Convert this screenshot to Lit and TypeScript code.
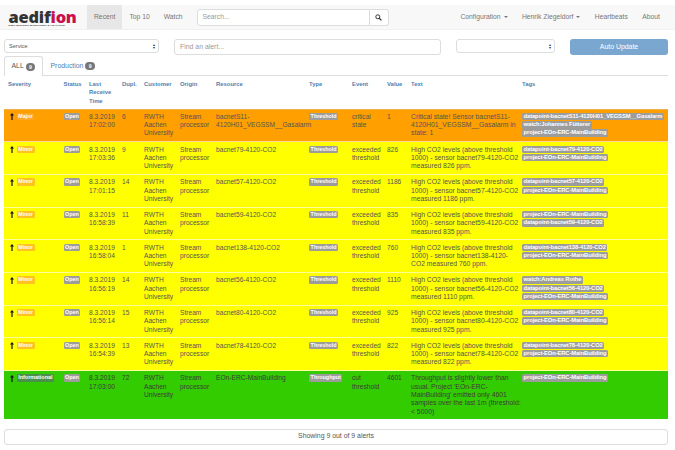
import { LitElement, html, css } from "lit";
import { customElement } from "lit/decorators.js";

type Row = {
  sev: string; cls: string; time: [string, string]; dupl: string; res: string;
  type: string; event: [string, string]; value: string; text: string[]; tags: string[];
};

const co2 = (n: string, v: string, time: string, dupl: string, tags?: string[], text?: string[]): Row => ({
  sev: "Minor", cls: "minor", time: ["8.3.2019", time], dupl, res: `bacnet${n}-4120-CO2`,
  type: "Threshold", event: ["exceeded", "threshold"], value: v,
  text: text ?? ["High CO2 levels (above threshold", `1000) - sensor bacnet${n}-4120-CO2`, `measured ${v} ppm.`],
  tags: tags ?? [`datapoint-bacnet${n}-4120-CO2`, "project-EOn-ERC-MainBuilding"],
});

const rows: Row[] = [
  { sev: "Major", cls: "major", time: ["8.3.2019", "17:02:00"], dupl: "6", res: "bacnetS11-4120H01_VEGSSM__Gasalarm",
    type: "Threshold", event: ["critical", "state"], value: "1",
    text: ["Critical state! Sensor bacnetS11-", "4120H01_VEGSSM__Gasalarm in", "state: 1"],
    tags: ["datapoint-bacnetS11-4120H01_VEGSSM__Gasalarm", "watch:Johannes Fütterer", "project-EOn-ERC-MainBuilding"] },
  co2("79", "826", "17:03:36", "9"),
  co2("57", "1186", "17:01:15", "14"),
  co2("59", "835", "16:58:39", "11", ["project-EOn-ERC-MainBuilding", "datapoint-bacnet59-4120-CO2"]),
  co2("138", "760", "16:58:04", "1", undefined, ["High CO2 levels (above threshold", "1000) - sensor bacnet138-4120-", "CO2 measured 760 ppm."]),
  co2("56", "1110", "16:56:19", "14", ["watch:Andreas Rothe", "datapoint-bacnet56-4120-CO2", "project-EOn-ERC-MainBuilding"]),
  co2("80", "925", "16:56:14", "15"),
  co2("78", "822", "16:54:39", "13"),
  { sev: "Informational", cls: "info", time: ["8.3.2019", "17:03:00"], dupl: "72", res: "EOn-ERC-MainBuilding",
    type: "Throughput", event: ["cut", "threshold"], value: "4601",
    text: ["Throughput is slightly lower than", "usual. Project 'EOn-ERC-", "MainBuilding' emitted only 4601", "samples over the last 1m (threshold:", "< 5000)"],
    tags: ["project-EOn-ERC-MainBuilding"] },
];

const widths = [55.5, 25.5, 33, 22, 36, 36, 93, 43, 35, 24, 111, 150];

@customElement("app-root")
export class AppRoot extends LitElement {
  static styles = css`
    :host { display: block; width: 675px; height: 450px; overflow: hidden; background: #fff; color: #333;
      font: 6.65px/8.3px "Liberation Sans", Arial, sans-serif; }
    * { box-sizing: border-box; }
    .nav { margin-top: 5px; height: 25px; background: #f8f8f8; border-bottom: 1px solid #f0f0f0; display: flex; align-items: stretch; color: #777; font-size: 6.75px; }
    .logo { width: 87px; padding: 4.5px 0 0 8.5px; color: #333; }
    .word { font: 800 16.4px/14px "Open Sans", sans-serif; letter-spacing: -0.2px; display: block; white-space: nowrap; }
    .word b { color: #c8104f; font-weight: 800; }
    .tagline { display: block; font: 700 2.5px/3px "Liberation Sans", sans-serif; white-space: nowrap; letter-spacing: .03em; }
    .tab { padding: 0 7px; display: flex; align-items: center; }
    .tab.on { background: #e7e7e7; }
    .search { display: flex; margin: 4px 0 0 7px; width: 192px; height: 17px; }
    .search .in { flex: 1; background: #fff; border: 1px solid #ddd; border-radius: 3px 0 0 3px; padding: 0 5px; color: #999; display: flex; align-items: center; }
    .search .btn { width: 19px; background: #fff; border: 1px solid #ddd; border-left: 0; border-radius: 0 3px 3px 0; display: flex; align-items: center; justify-content: center; }
    .right { margin-left: auto; display: flex; padding-right: 8px; }
    .right div { padding: 0 7.2px; display: flex; align-items: center; gap: 3px; }
    .caret { width: 0; height: 0; border: 2px solid transparent; border-top-color: #777; border-bottom: 0; }

    .filters { display: flex; padding: 9px 7px 0 4px; align-items: flex-start; height: 26px; }
    .sel { height: 14px; border: 1px solid #ddd; border-radius: 3px; background: #fff; display: flex; align-items: center; justify-content: space-between; padding: 0 3px 0 4px; font-size: 5.6px; color: #555; }
    .sel i { font-style: normal; font-size: 4px; line-height: 3.5px; width: 3px; display: block; color: #333; text-align: center; }
    .s1 { width: 155px; }
    .find { width: 267px; margin-left: 15px; height: 16px; border: 1px solid #ddd; border-radius: 3px; padding: 0 5px; display: flex; align-items: center; color: #999; font-size: 6.9px; }
    .s2 { width: 99px; margin-left: 15px; }
    .auto { width: 98px; margin-left: 15px; height: 16px; border-radius: 3px; background: #7aa7d0; color: #fff; display: flex; align-items: center; justify-content: center; font-size: 6.9px; }

    .tabs { margin: 0 7px 0 4px; height: 20px; display: flex; border-bottom: 1px solid #ddd; font-size: 6.9px; }
    .t { padding: 0 7.5px; display: flex; align-items: center; gap: 2px; color: #4d7fb0; height: 20px; }
    .t.on { color: #555; background: #fff; border: 1px solid #ddd; border-bottom: 0; border-radius: 3px 3px 0 0; width: 39px; padding: 0 6.5px; }
    .badge { display: inline-block; background: #777; color: #fff; border-radius: 5px; width: 9.5px; height: 8px; text-align: center; font: 700 5.2px/8px "Liberation Sans", sans-serif; }

    table { width: 664px; margin-left: 4px; border-collapse: collapse; table-layout: fixed; }
    th { text-align: left; vertical-align: top; font-weight: 700; color: #4d7fb0; padding: 4px 0 0 4px; height: 33px; border: 0; font-size: 5.9px; }
    td { vertical-align: top; padding: 3.4px 0 0 4px; color: #555; border-top: .7px solid rgba(255,255,255,.6); height: 32.7px; }
    td.txt { font-size: 6.8px; white-space: nowrap; }
    tr.major td { background: #ff9f00; }
    tr.minor td { background: #ffff00; }
    tr.info td { background: #33cc00; height: 48.5px; color: #3c3c3c; }
    tbody tr:first-child td { border-top: 1px solid #f0b050; }
    .lb { display: inline-block; color: #fff; font-weight: 700; font-size: 5.4px; line-height: 7.4px; padding: 0 1.6px; border-radius: 1.5px; background: #9c9c9c; white-space: nowrap; vertical-align: top; }
    .sev { display: flex; align-items: flex-start; gap: 3px; padding-left: 1.7px; }
    .sev svg { flex: none; margin-top: .5px; }
    .major .sl { background: #ffa726; }
    .minor .sl { background: #ffc21f; }
    .info .sl { background: #4a8f4a; }
    .tg { display: block; width: max-content; margin-bottom: .9px; font-size: 5.8px; letter-spacing: -.1px; }
    .foot { margin: 9.5px 7px 0 4px; height: 16px; border: 1px solid #ddd; border-radius: 3px; display: flex; align-items: center; justify-content: center; color: #555; font-size: 6.9px; }
  `;

  private arrow() {
    return html`<svg width="4" height="7" viewBox="0 0 4 7"><path d="M2 0 L4 2.6 H2.6 V7 H1.4 V2.6 H0 Z" fill="#111"/></svg>`;
  }

  render() {
    const heads = ["Severity", "Status", "Last Receive Time", "Dupl.", "Customer", "Origin", "Resource", "Type", "Event", "Value", "Text", "Tags"];
    return html`
      <div class="nav">
        <div class="logo"><span class="word">aedif<b>ion</b></span><span class="tagline">DEEP BUILDING MONITORING &amp; ANALYTICS</span></div>
        <div class="tab on">Recent</div><div class="tab">Top 10</div><div class="tab">Watch</div>
        <div class="search"><div class="in">Search...</div><div class="btn">
          <svg width="7" height="7" viewBox="0 0 7 7"><circle cx="2.8" cy="2.8" r="2" fill="none" stroke="#333" stroke-width="1"/><path d="M4.3 4.3 L6.4 6.4" stroke="#333" stroke-width="1.3"/></svg>
        </div></div>
        <div class="right">
          <div>Configuration <span class="caret"></span></div>
          <div>Henrik Ziegeldorf <span class="caret"></span></div>
          <div>Heartbeats</div><div>About</div>
        </div>
      </div>
      <div class="filters">
        <div class="sel s1">Service<i>▴<br>▾</i></div>
        <div class="find">Find an alert...</div>
        <div class="sel s2"><span></span><i>▴<br>▾</i></div>
        <div class="auto">Auto Update</div>
      </div>
      <div class="tabs">
        <div class="t on">ALL <span class="badge">9</span></div>
        <div class="t">Production <span class="badge">9</span></div>
      </div>
      <table>
        <colgroup>${widths.map((w) => html`<col style="width:${w}px" />`)}</colgroup>
        <thead><tr>${heads.map((h) => html`<th>${h}</th>`)}</tr></thead>
        <tbody>
          ${rows.map((r) => html`<tr class=${r.cls}>
            <td><div class="sev">${this.arrow()}<span class="lb sl">${r.sev}</span></div></td>
            <td><span class="lb">Open</span></td>
            <td>${r.time[0]}<br />${r.time[1]}</td>
            <td>${r.dupl}</td>
            <td>RWTH Aachen University</td>
            <td>Stream processor</td>
            <td>${r.res}</td>
            <td><span class="lb">${r.type}</span></td>
            <td>${r.event[0]}<br />${r.event[1]}</td>
            <td>${r.value}</td>
            <td class="txt">${r.text.map((l) => html`${l}<br />`)}</td>
            <td>${r.tags.map((t) => html`<span class="lb tg">${t}</span>`)}</td>
          </tr>`)}
        </tbody>
      </table>
      <div class="foot">Showing 9 out of 9 alerts</div>
    `;
  }
}
